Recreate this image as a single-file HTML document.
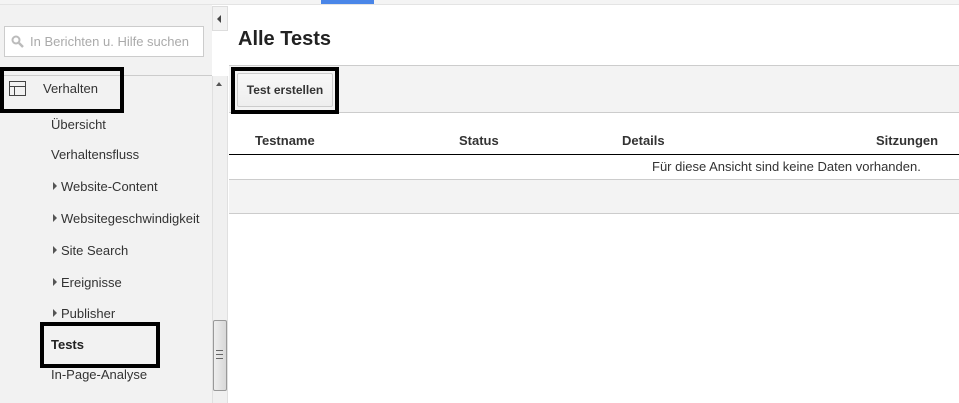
<!DOCTYPE html>
<html><head><style>
*{margin:0;padding:0;box-sizing:border-box}
body{width:959px;height:403px;overflow:hidden;background:#fff;font-family:"Liberation Sans",Arial,sans-serif;position:relative;color:#222}
.a{position:absolute}
.nav{font-size:13px;color:#333;left:51px}
.tri{display:inline-block;width:0;height:0;border-left:4px solid #555;border-top:4px solid transparent;border-bottom:4px solid transparent;margin-right:4px;vertical-align:1px}
</style></head><body>
<div class="a" style="left:0;top:0;width:212px;height:403px;background:#f2f2f2"></div>
<div class="a" style="left:0;top:0;width:959px;height:5px;background:#f4f4f4;border-bottom:1px solid #e4e4e4"></div>
<div class="a" style="left:321px;top:0;width:53px;height:4px;background:#4a86e8"></div>
<div class="a" style="left:212px;top:6px;width:16px;height:25px;background:#f2f2f2;border:1px solid #ddd"></div>
<div class="a" style="left:217px;top:15px;border-right:4px solid #444;border-top:4px solid transparent;border-bottom:4px solid transparent"></div>
<div class="a" style="left:212px;top:76px;width:16px;height:327px;background:#f0f0f0;border-left:1px solid #e0e0e0;border-right:1px solid #e0e0e0"></div>
<div class="a" style="left:216px;top:82px;border-bottom:4px solid #555;border-left:3px solid transparent;border-right:3px solid transparent"></div>
<div class="a" style="left:213px;top:320px;width:14px;height:71px;border:1px solid #999;border-radius:2px;background:linear-gradient(90deg,#eee,#d8d8d8)"></div>
<div class="a" style="left:216px;top:350px;width:7px;height:9px;border-top:1px solid #666;border-bottom:1px solid #666"><div style="margin-top:3px;border-top:1px solid #666"></div></div>
<div class="a" style="left:4px;top:26px;width:200px;height:31px;background:#fff;border:1px solid #ccc;font-size:13px;color:#aaa;line-height:29px;padding-left:25px">In Berichten u. Hilfe suchen</div>
<svg class="a" style="left:11px;top:35px" width="13" height="13"><circle cx="5" cy="5" r="3.5" fill="none" stroke="#bbb" stroke-width="2"/><line x1="8" y1="8" x2="12" y2="12" stroke="#bbb" stroke-width="2.5"/></svg>
<div class="a" style="left:0;top:75px;width:212px;height:1px;background:#ccc"></div>
<svg class="a" style="left:9px;top:81px" width="17" height="15"><rect x="0.5" y="0.5" width="16" height="14" fill="none" stroke="#444"/><line x1="0" y1="5.5" x2="17" y2="5.5" stroke="#444"/><line x1="5.5" y1="5" x2="5.5" y2="15" stroke="#444"/></svg>
<div class="a" style="left:43px;top:81px;font-size:13px;color:#333">Verhalten</div>
<div class="a" style="left:0;top:67px;width:124px;height:46px;border:4px solid #000"></div>
<div class="a nav" style="top:117px">Übersicht</div>
<div class="a nav" style="top:147px">Verhaltensfluss</div>
<div class="a nav" style="top:179px;left:53px"><span class="tri"></span>Website-Content</div>
<div class="a nav" style="top:211px;left:53px"><span class="tri"></span>Websitegeschwindigkeit</div>
<div class="a nav" style="top:243px;left:53px"><span class="tri"></span>Site Search</div>
<div class="a nav" style="top:275px;left:53px"><span class="tri"></span>Ereignisse</div>
<div class="a nav" style="top:306px;left:53px"><span class="tri"></span>Publisher</div>
<div class="a nav" style="top:337px;font-weight:bold;color:#222">Tests</div>
<div class="a" style="left:40px;top:322px;width:120px;height:46px;border:4px solid #000"></div>
<div class="a nav" style="top:367px">In-Page-Analyse</div>
<div class="a" style="left:238px;top:28px;font-size:20px;font-weight:bold;color:#222">Alle Tests</div>
<div class="a" style="left:229px;top:65px;width:730px;height:48px;background:#f3f3f3;border-top:1px solid #ccc;border-bottom:1px solid #ccc"></div>
<div class="a" style="left:237px;top:73px;width:96px;height:34px;background:linear-gradient(#f8f8f8,#eee);border:1px solid #ccc;border-radius:2px;font-size:12px;font-weight:bold;color:#333;text-align:center;line-height:32px">Test erstellen</div>
<div class="a" style="left:231px;top:67px;width:108px;height:47px;border:4px solid #000"></div>
<div class="a" style="top:133px;left:255px;font-size:13px;font-weight:bold;color:#333">Testname</div>
<div class="a" style="top:133px;left:459px;font-size:13px;font-weight:bold;color:#333">Status</div>
<div class="a" style="top:133px;left:622px;font-size:13px;font-weight:bold;color:#333">Details</div>
<div class="a" style="top:133px;left:876px;font-size:13px;font-weight:bold;color:#333">Sitzungen</div>
<div class="a" style="left:229px;top:154px;width:730px;height:1px;background:#000"></div>
<div class="a" style="top:159px;left:652px;font-size:13px;color:#333">Für diese Ansicht sind keine Daten vorhanden.</div>
<div class="a" style="left:229px;top:179px;width:730px;height:35px;background:#f3f3f3;border-top:1px solid #ccc;border-bottom:1px solid #ccc"></div>
</body></html>
